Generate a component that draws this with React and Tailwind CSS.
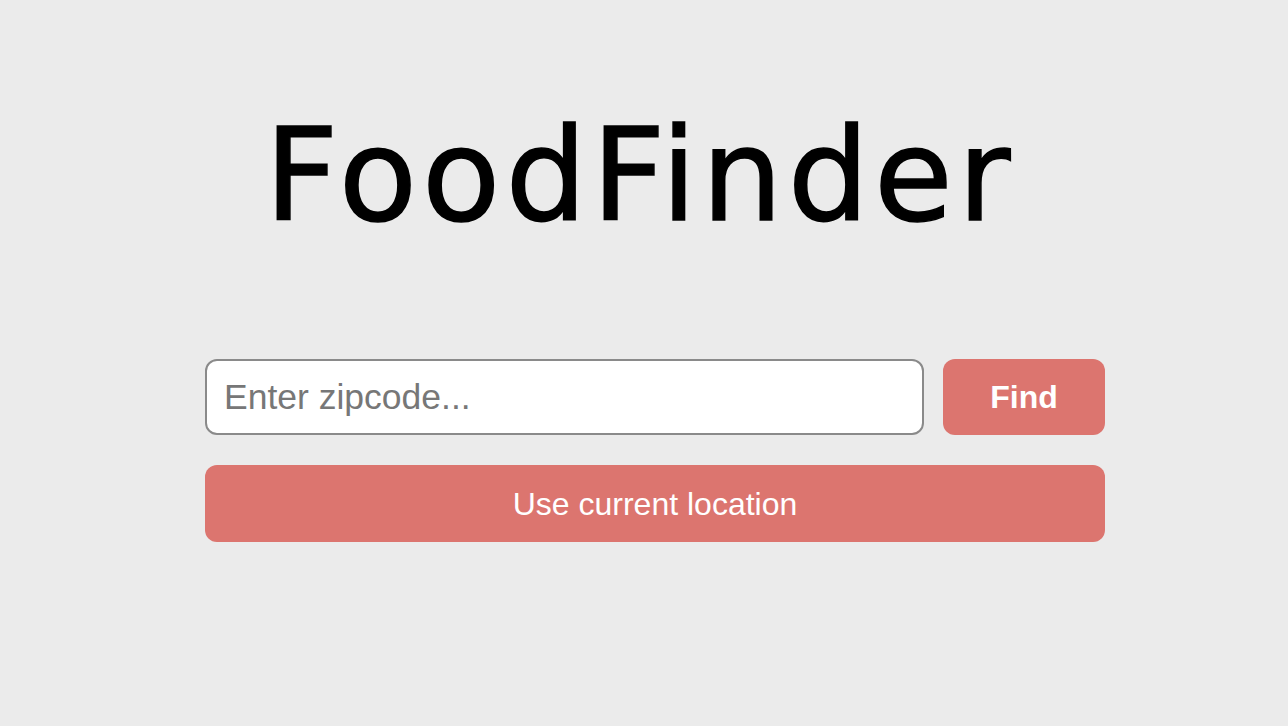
import { useState } from 'react';

const App = () => {
  const [zip, setZip] = useState('');

  return (
    <div className="min-h-screen w-full bg-[#ebebeb] pt-[112px]">
      <h1
        className="text-center text-[128px] leading-[128px] tracking-[5px] text-black pr-[8px] [-webkit-text-stroke:1.5px_black]"
        style={{ fontFamily: '"DejaVu Sans", sans-serif' }}
      >
        FoodFinder
      </h1>

      <div
        className="ml-[205px] mt-[119px] w-[900px] flex flex-col gap-[30px]"
        style={{ fontFamily: '"Liberation Sans", Arial, sans-serif' }}
      >
        <div className="flex gap-[19px]">
          <input
            type="text"
            value={zip}
            onChange={(e) => setZip(e.target.value)}
            placeholder="Enter zipcode..."
            className="h-[76px] flex-1 rounded-[12px] border-2 border-[#8a8a8a] bg-white pl-[17px] text-[35.5px] text-[#333] placeholder:text-[#777] outline-none"
          />
          <button className="h-[76px] w-[162px] rounded-[12px] bg-[#dc756f] text-[32px] font-bold text-white">
            Find
          </button>
        </div>
        <button className="h-[77px] w-full rounded-[12px] bg-[#dc756f] text-[32px] text-white">
          Use current location
        </button>
      </div>
    </div>
  );
};

export default App;
